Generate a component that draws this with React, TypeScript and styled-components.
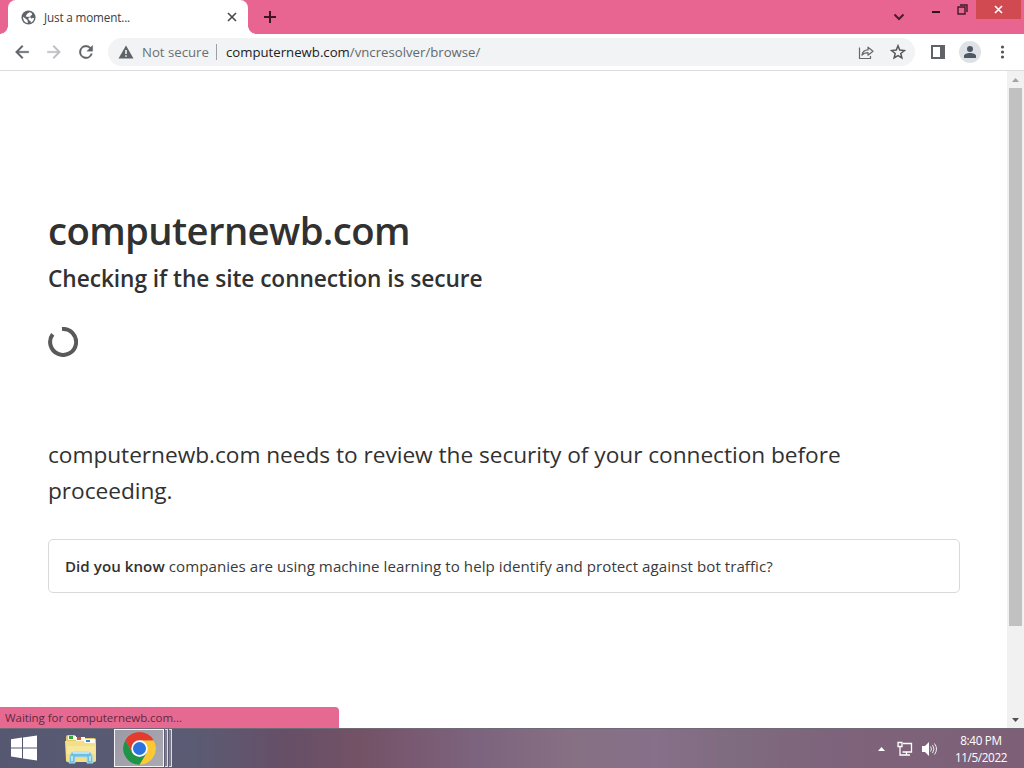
import React from "react";
import styled, { createGlobalStyle } from "styled-components";

const Global = createGlobalStyle`
  * { box-sizing: border-box; }
  html, body { margin: 0; padding: 0; overflow: hidden; }
  body { font-family: "Open Sans", "Noto Sans", sans-serif; }
  svg { display: block; flex: none; }
`;

const Desktop = styled.div`
  width: 1024px;
  height: 768px;
  display: flex;
  flex-direction: column;
  overflow: hidden;
  background: #fff;
`;

const Browser = styled.div`
  position: relative;
  height: 728px;
  display: flex;
  flex-direction: column;
`;

const TabStrip = styled.div`
  height: 34px;
  background: #e86591;
  display: flex;
  padding-left: 8px;
`;

const Tab = styled.div`
  position: relative;
  width: 240px;
  height: 34px;
  padding: 0 9px 0 13px;
  background: #fff;
  border-radius: 8px 8px 0 0;
  display: flex;
  align-items: center;
  &::before, &::after {
    content: "";
    position: absolute;
    bottom: 0;
    width: 8px;
    height: 8px;
  }
  &::before { left: -8px; background: radial-gradient(circle at 0 0, transparent 7.5px, #fff 8px); }
  &::after { right: -8px; background: radial-gradient(circle at 100% 0, transparent 7.5px, #fff 8px); }
`;

const Line = styled.span<{ $size: number; $spacing?: number; $color?: string; $weight?: number }>`
  font-size: ${(p) => p.$size}px;
  letter-spacing: ${(p) => p.$spacing ?? 0}px;
  color: ${(p) => p.$color ?? "#3c4043"};
  font-weight: ${(p) => p.$weight ?? 400};
  white-space: pre;
`;

const TabTitle = styled.div`
  flex: 1;
  padding: 0 0 1px 8px;
  display: flex;
`;

const NewTab = styled.div`
  width: 44px;
  display: flex;
  align-items: center;
  justify-content: center;
`;

const WindowControls = styled.div`
  margin-left: auto;
  display: flex;
  align-items: flex-start;
`;

const ControlButton = styled.div<{ $width: number; $height: number; $danger?: boolean }>`
  width: ${(p) => p.$width}px;
  height: ${(p) => p.$height}px;
  background: ${(p) => (p.$danger ? "#d14a52" : "transparent")};
  display: flex;
  align-items: center;
  justify-content: center;
`;

const Toolbar = styled.div`
  height: 37px;
  padding: 0 13px 0 12px;
  border-bottom: 1px solid #dadce0;
  background: #fff;
  display: flex;
  align-items: center;
`;

const NavGroup = styled.div`
  width: 96px;
  display: flex;
  gap: 12px;
`;

const AddressBar = styled.div`
  width: 807px;
  height: 28px;
  padding: 0 9px 0 10px;
  border-radius: 14px;
  background: #f1f3f4;
  display: flex;
  align-items: center;
`;

const Security = styled.div`
  width: 83px;
  height: 16px;
  padding-left: 8px;
  border-right: 1px solid #9aa0a6;
  display: flex;
  align-items: center;
`;

const Url = styled.div`
  flex: 1;
  padding-left: 9px;
  display: flex;
`;

const AddressActions = styled.div`
  display: flex;
  gap: 16px;
`;

const ToolbarActions = styled.div`
  margin-left: auto;
  display: flex;
  align-items: center;
  gap: 14px;
`;

const Avatar = styled.div`
  width: 22px;
  height: 22px;
  border-radius: 50%;
  background: #dee1e6;
  display: flex;
  align-items: center;
  justify-content: center;
`;

const Viewport = styled.div`
  height: 657px;
  display: flex;
`;

const Page = styled.main`
  width: 1007px;
  padding: 129px 47px 0 48px;
`;

const Title = styled.h1`
  margin: 0;
  height: 62px;
  font-size: 38.3px;
  line-height: 60px;
  font-weight: 600;
  letter-spacing: -0.62px;
  color: #313131;
`;

const Subtitle = styled.h2`
  margin: 0;
  height: 36px;
  font-size: 22.7px;
  line-height: 34px;
  font-weight: 600;
  letter-spacing: -0.06px;
  color: #313131;
`;

const Spinner = styled.div`
  height: 139px;
  padding-top: 29px;
`;

const Review = styled.p`
  margin: 0;
  font-size: 22.7px;
  line-height: 36px;
  letter-spacing: -0.04px;
  color: #313131;
  white-space: pre;
`;

const Fact = styled.div`
  width: 912px;
  height: 54px;
  margin-top: 30px;
  padding-left: 16px;
  border: 1px solid #d9d9d9;
  border-radius: 5px;
  display: flex;
  align-items: center;
`;

const Scrollbar = styled.div`
  width: 17px;
  background: #f1f1f1;
  display: flex;
  flex-direction: column;
  align-items: center;
`;

const ScrollButton = styled.div`
  height: 17px;
  display: flex;
  align-items: center;
`;

const Thumb = styled.div`
  width: 13px;
  height: 538px;
  margin-bottom: auto;
  background: #c1c1c1;
`;

const StatusBubble = styled.div`
  position: absolute;
  left: 0;
  bottom: 0;
  width: 339px;
  height: 21px;
  padding-left: 5px;
  border-radius: 0 4px 0 0;
  background: #e66991;
  display: flex;
  align-items: center;
`;

const Taskbar = styled.div`
  height: 40px;
  display: flex;
  align-items: center;
  background: linear-gradient(90deg, #565871 0, #5b5b74 19%, #664f67 28%, #735266 35%, #795971 40%, #7d647e 47%, #877084 56%, #86708a 64%, #7f6b7f 72%, #7d637b 82%, #7d6078 100%);
  box-shadow: inset 0 1px 0 #706a77;
`;

const StartButton = styled.div`
  width: 60px;
  padding-left: 10px;
`;

const Explorer = styled.div`
  width: 54px;
  padding: 2px 0 0 4px;
`;

const ActiveStack = styled.div`
  height: 40px;
  display: flex;
  align-items: center;
  gap: 1px;
`;

const ActiveApp = styled.div`
  width: 50px;
  height: 38px;
  border: 1px solid #f4f4f6;
  background: linear-gradient(135deg, #9b9aa5, #aaaab3);
  display: flex;
  align-items: center;
  justify-content: center;
`;

const StackEdge = styled.div`
  width: 3px;
  height: 38px;
  border: 1px solid #dcdce2;
  border-left: 0;
  background: #7d7c8c;
`;

const Tray = styled.div`
  margin-left: auto;
  padding-right: 16px;
  display: flex;
  align-items: center;
`;

const TrayIcons = styled.div`
  display: flex;
  align-items: center;
  gap: 8px;
  margin: 1px 17px 0 0;
`;

const Clock = styled.div`
  width: 54px;
  padding-top: 1px;
  display: flex;
  flex-direction: column;
  align-items: center;
  line-height: 17px;
`;

const Triangle = ({ down, color }: { down?: boolean; color: string }) => (
  <svg width="7" height="4" viewBox="0 0 7 4">
    <path d={down ? "M0 0h7L3.5 4z" : "M0 4h7L3.5 0z"} fill={color} />
  </svg>
);

const GlobeIcon = () => (
  <svg width="15" height="15" viewBox="0 0 16 16">
    <circle cx="8" cy="8" r="7.5" fill="#5f6368" />
    <path d="M2.2 7.2 6 10.2c1 .5 1.3 1 1 1.8l.4 1.9C4.400 13.800 2 11.200 2.200 7.200zM9.200 2.200C8.500 3.400 7.500 3.500 6.400 4 6 5.500 5.500 6 4.700 6.600L7.500 7.400c1.700-.4 2.800.2 3.200 1.600 1.500.1 2.100-.5 3.200-.7.2 2.300-1.400 4.700-3.600 5.300.5-1.300-.2-2.100-1.500-2.400L7.800 9.200c.2-1 .9-1.300 2-1.500l.3-1.600 1.800-.8-.4-1.900z" fill="#fff" />
  </svg>
);

const NavIcon = ({ d, color = "#5f6368" }: { d: string; color?: string }) => (
  <svg width="20" height="20" viewBox="0 0 24 24"><path d={d} fill={color} stroke={color} strokeWidth="0.400" /></svg>
);

const FolderIcon = () => (
  <svg width="34" height="30" viewBox="0 0 34 30">
    <path d="M2 3q0-2 2-2h7l1 3h18q2 0 2 2v20q0 2-2 2H4q-2 0-2-2z" fill="#e2c96c" />
    <path d="M4 2h8v4H4z" fill="#fffbe4" /><path d="M5 2h4v3H5z" fill="#35a735" />
    <path d="M12 3h9v4h-9z" fill="#fff8df" /><path d="M13 3h4v3h-4z" fill="#d94c35" />
    <path d="M20 5h11v4H20z" fill="#fffdf1" /><path d="M22 6h4v2h-4z" fill="#3587c8" />
    <path d="M1 7h18l2 2h11v17q0 2-2 2H4q-2 0-2-2z" fill="#f2df88" />
    <path d="M3 12h28v8H3z" fill="#f7e79c" />
    <path d="M5 29l1-8q1-3 4-3h14q3 0 4 3l1 8h-6v-6H11v6z" fill="#70bedf" stroke="#a6ddeb" />
    <path d="M9 19h16M8 22v5M26 22v5" fill="none" stroke="#cceff9" strokeWidth="1.500" />
  </svg>
);

const ChromeIcon = () => (
  <svg width="33" height="33" viewBox="0 0 48 48">
    <path d="M24 24 3.600 12A23.600 23.600 0 0 1 44.400 12z" fill="#db4437" />
    <path d="M24 12h20.400A23.600 23.600 0 0 1 24 47.600L34.400 30z" fill="#fcc934" />
    <path d="M34.400 30 24 47.600A23.600 23.600 0 0 1 3.600 12l10 18A12 12 0 0 0 34.400 30z" fill="#1e9446" />
    <path d="M3.600 12A23.600 23.600 0 0 1 44.400 12H24L13.600 30z" fill="#e33b2e" />
    <circle cx="24" cy="24" r="12" fill="#fff" />
    <circle cx="24" cy="24" r="9.500" fill="#2a74df" />
  </svg>
);

export default function App() {
  return (
    <Desktop>
      <Global />
      <Browser>
        <TabStrip>
          <Tab>
            <GlobeIcon />
            <TabTitle><Line $size={11.7} $spacing={-0.15}>Just a moment...</Line></TabTitle>
            <svg width="14" height="14" viewBox="0 0 14 14"><path d="m3 3 8 8m0-8-8 8" stroke="#45494d" strokeWidth="1.600" /></svg>
          </Tab>
          <NewTab>
            <svg width="14" height="14" viewBox="0 0 14 14"><path d="M7 1v12M1 7h12" stroke="#3c1626" strokeWidth="2" /></svg>
          </NewTab>
          <WindowControls>
            <ControlButton $width={49} $height={34}>
              <svg width="12" height="8" viewBox="0 0 12 8"><path d="m1.500 1.500 4.500 4.500 4.500-4.500" fill="none" stroke="#491b2e" strokeWidth="2" /></svg>
            </ControlButton>
            <ControlButton $width={26} $height={24}>
              <svg width="8" height="2" viewBox="0 0 8 2"><path d="M0 0h8v2H0z" fill="#2b121b" /></svg>
            </ControlButton>
            <ControlButton $width={27} $height={19}>
              <svg width="11" height="11" viewBox="0 0 11 11"><path d="M1 3h7v7H1zM3 1h7v7" fill="none" stroke="#431a2a" strokeWidth="1.400" /></svg>
            </ControlButton>
            <ControlButton $width={45} $height={19} $danger>
              <svg width="9" height="9" viewBox="0 0 9 9"><path d="m1 1 7 7m0-7-7 7" stroke="#fff" strokeWidth="1.600" /></svg>
            </ControlButton>
            <ControlButton $width={3} $height={19} />
          </WindowControls>
        </TabStrip>
        <Toolbar>
          <NavGroup>
            <NavIcon d="M20 11H7.830l5.590-5.590L12 4l-8 8 8 8 1.410-1.410L7.830 13H20z" />
            <NavIcon d="m12 4-1.410 1.410L16.170 11H4v2h12.170l-5.580 5.590L12 20l8-8z" color="#bcbec1" />
            <NavIcon d="M17.650 6.350A8 8 0 1 0 19.730 14h-2.080A6 6 0 1 1 12 6c1.660 0 3.140.69 4.220 1.780L13 11h7V4z" />
          </NavGroup>
          <AddressBar>
            <svg width="16" height="16" viewBox="0 0 16 16"><path d="M8 1.500 15.500 14.500H.5z" fill="#5f6368" /><path d="M7.200 6h1.600v4H7.200zM7.200 11.200h1.600v1.600H7.200z" fill="#f1f3f4" /></svg>
            <Security><Line $size={13.2} $color="#6b6f73">Not secure</Line></Security>
            <Url>
              <Line $size={13.2} $color="#202124">computernewb.com</Line>
              <Line $size={13.2} $color="#65696d">/vncresolver/browse/</Line>
            </Url>
            <AddressActions>
              <svg width="16" height="16" viewBox="0 0 16 16"><path d="M1.500 3.500v11h11v-2.500M4 11.200c.5-3.500 2.400-5.200 6-5.300V3.200l5 4-5 4V8.600c-2.700 0-4.500.700-6 2.600z" fill="none" stroke="#65696d" strokeWidth="1.200" strokeLinejoin="round" /></svg>
              <svg width="16" height="16" viewBox="0 0 16 16"><path d="m8 1.800 1.700 4.300 4.700.4-3.600 3 1.100 4.500L8 11.600 4.100 14l1.100-4.500-3.600-3 4.700-.4z" fill="none" stroke="#55595d" strokeWidth="1.500" /></svg>
            </AddressActions>
          </AddressBar>
          <ToolbarActions>
            <svg width="14" height="14" viewBox="0 0 14 14"><path d="M1 1h12v12H1z" fill="none" stroke="#5f6368" strokeWidth="2" /><path d="M9 1h4v12H9z" fill="#5f6368" /></svg>
            <Avatar>
              <svg width="14" height="14" viewBox="0 0 14 14"><circle cx="7" cy="4" r="3" fill="#4c5863" /><path d="M1 13v-2c0-2 3-3 6-3s6 1 6 3v2z" fill="#4c5863" /></svg>
            </Avatar>
            <svg width="16" height="16" viewBox="0 0 16 16"><g fill="#505458"><circle cx="7.500" cy="3" r="1.600" /><circle cx="7.500" cy="8" r="1.600" /><circle cx="7.500" cy="13" r="1.600" /></g></svg>
          </ToolbarActions>
        </Toolbar>
        <Viewport>
          <Page>
            <Title>computernewb.com</Title>
            <Subtitle>Checking if the site connection is secure</Subtitle>
            <Spinner>
              <svg width="30" height="30" viewBox="0 0 30 30"><path d="M14 2A13 13 0 1 1 4.700 7.200" fill="none" stroke="#595959" strokeWidth="4" /></svg>
            </Spinner>
            <Review>{"computernewb.com needs to review the security of your connection before\nproceeding."}</Review>
            <Fact>
              <Line $size={15.1} $spacing={0.05} $weight={600} $color="#313131">Did you know</Line>
              <Line $size={15.1} $spacing={0.05} $color="#3a3a3a"> companies are using machine learning to help identify and protect against bot traffic?</Line>
            </Fact>
          </Page>
          <Scrollbar>
            <ScrollButton><Triangle color="#a3a3a3" /></ScrollButton>
            <Thumb />
            <ScrollButton><Triangle down color="#505050" /></ScrollButton>
          </Scrollbar>
        </Viewport>
        <StatusBubble><Line $size={11.5} $spacing={-0.06} $color="#5f2a3e">Waiting for computernewb.com...</Line></StatusBubble>
      </Browser>
      <Taskbar>
        <StartButton>
          <svg width="28" height="26" viewBox="0 0 28 26"><path d="M1 4.200 12 2.600v9.800H1zM13 2.400 27 .4v12H13zM1 13.400h11v9.800L1 21.600zM13 13.400h14v12l-14-2z" fill="#fff" /></svg>
        </StartButton>
        <Explorer><FolderIcon /></Explorer>
        <ActiveStack>
          <ActiveApp><ChromeIcon /></ActiveApp>
          <StackEdge />
          <StackEdge />
        </ActiveStack>
        <Tray>
          <TrayIcons>
            <Triangle color="#fff" />
            <svg width="20" height="16" viewBox="0 0 20 16"><path d="M10 2.500h8.500v8.500H9.500M13.500 11v3M10 14h7" fill="none" stroke="#fff" strokeWidth="1.300" /><path d="M5 1.500h4v4H5zM7 5.500v8.500h3" fill="none" stroke="#fff" strokeWidth="1.300" /></svg>
            <svg width="16" height="16" viewBox="0 0 16 16"><path d="M1 5h3l4-4v14l-4-4H1z" fill="#fff" /><path d="M9.500 5.500q2 2.500 0 5M11.500 4q3 4 0 8M13.500 2.500q4 5.500 0 11" fill="none" stroke="#eee" strokeWidth="1" /></svg>
          </TrayIcons>
          <Clock>
            <Line $size={11.7} $spacing={-0.3} $color="#fff">8:40 PM</Line>
            <Line $size={11.7} $spacing={-0.35} $color="#fff">11/5/2022</Line>
          </Clock>
        </Tray>
      </Taskbar>
    </Desktop>
  );
}
